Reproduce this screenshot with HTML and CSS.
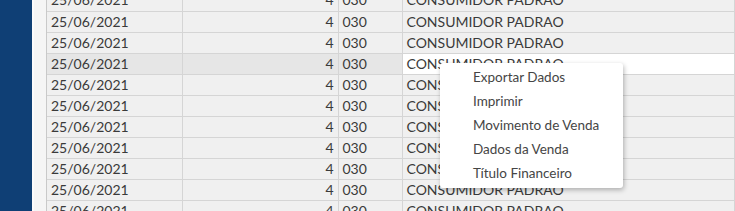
FILE: index.html
```html
<!DOCTYPE html>
<html>
<head>
<meta charset="utf-8">
<link rel="stylesheet" href="styles.css">
</head>
<body>
<div class="app">
  <aside class="sidebar"></aside>
  <div class="gutter"></div>
  <main class="grid-area">
    <table class="grid">
      <colgroup>
        <col class="c-date"><col class="c-num"><col class="c-code"><col class="c-name">
      </colgroup>
      <tbody>
        <tr><td>25/06/2021</td><td class="num">4</td><td>030</td><td>CONSUMIDOR PADRAO</td></tr>
        <tr><td>25/06/2021</td><td class="num">4</td><td>030</td><td>CONSUMIDOR PADRAO</td></tr>
        <tr><td>25/06/2021</td><td class="num">4</td><td>030</td><td>CONSUMIDOR PADRAO</td></tr>
        <tr class="hover"><td>25/06/2021</td><td class="num">4</td><td>030</td><td class="active">CONSUMIDOR PADRAO</td></tr>
        <tr><td>25/06/2021</td><td class="num">4</td><td>030</td><td>CONSUMIDOR PADRAO</td></tr>
        <tr><td>25/06/2021</td><td class="num">4</td><td>030</td><td>CONSUMIDOR PADRAO</td></tr>
        <tr><td>25/06/2021</td><td class="num">4</td><td>030</td><td>CONSUMIDOR PADRAO</td></tr>
        <tr><td>25/06/2021</td><td class="num">4</td><td>030</td><td>CONSUMIDOR PADRAO</td></tr>
        <tr><td>25/06/2021</td><td class="num">4</td><td>030</td><td>CONSUMIDOR PADRAO</td></tr>
        <tr><td>25/06/2021</td><td class="num">4</td><td>030</td><td>CONSUMIDOR PADRAO</td></tr>
        <tr><td>25/06/2021</td><td class="num">4</td><td>030</td><td>CONSUMIDOR PADRAO</td></tr>
      </tbody>
    </table>
    <ul class="context-menu">
      <li>Exportar Dados</li>
      <li>Imprimir</li>
      <li>Movimento de Venda</li>
      <li>Dados da Venda</li>
      <li>Título Financeiro</li>
    </ul>
  </main>
</div>
</body>
</html>
```
FILE: styles.css
```css
html, body {
  margin: 0;
  padding: 0;
  height: 100%;
  overflow: hidden;
  background: #f4f4f4;
}
.app {
  display: flex;
  height: 211px;
  font-family: Lato, "Open Sans", sans-serif;
  font-size: 14px;
  color: #3a3a3a;
}
.sidebar {
  width: 32px;
  flex: none;
  background: #0f3f75;
}
.gutter {
  width: 12px;
  flex: none;
  background: #f5f5f5;
  border-left: 2px solid #fbfbfb;
}
.grid-area {
  flex: 1;
  position: relative;
  overflow: hidden;
  border-left: 1px solid #c9c9c9;
}
.grid {
  border-collapse: collapse;
  table-layout: fixed;
  width: 100%;
  margin-top: -10px;
}
.c-date { width: 135px; }
.c-num { width: 156px; }
.c-code { width: 64px; }
.grid td {
  height: 21px;
  padding: 0 4px;
  border: 1px solid #d5d5d5;
  border-top: 0;
  background: #f0f0f0;
  white-space: nowrap;
  overflow: hidden;
  line-height: 20px;
  box-sizing: border-box;
}
.grid tr td:first-child { border-left: 0; }
.grid td.num { text-align: right; }
.grid tr.hover td { background: #e6e6e6; }
.grid tr.hover td.active { background: #ffffff; }
.context-menu {
  position: absolute;
  left: 393px;
  top: 63px;
  width: 183px;
  margin: 0;
  padding: 2px 0 3px;
  list-style: none;
  background: #ffffff;
  border-radius: 3px;
  box-shadow: 1px 2px 5px rgba(0, 0, 0, 0.28);
  font-size: 13.5px;
  color: #454545;
}
.context-menu li {
  height: 24px;
  line-height: 24px;
  padding-left: 33px;
}
```
